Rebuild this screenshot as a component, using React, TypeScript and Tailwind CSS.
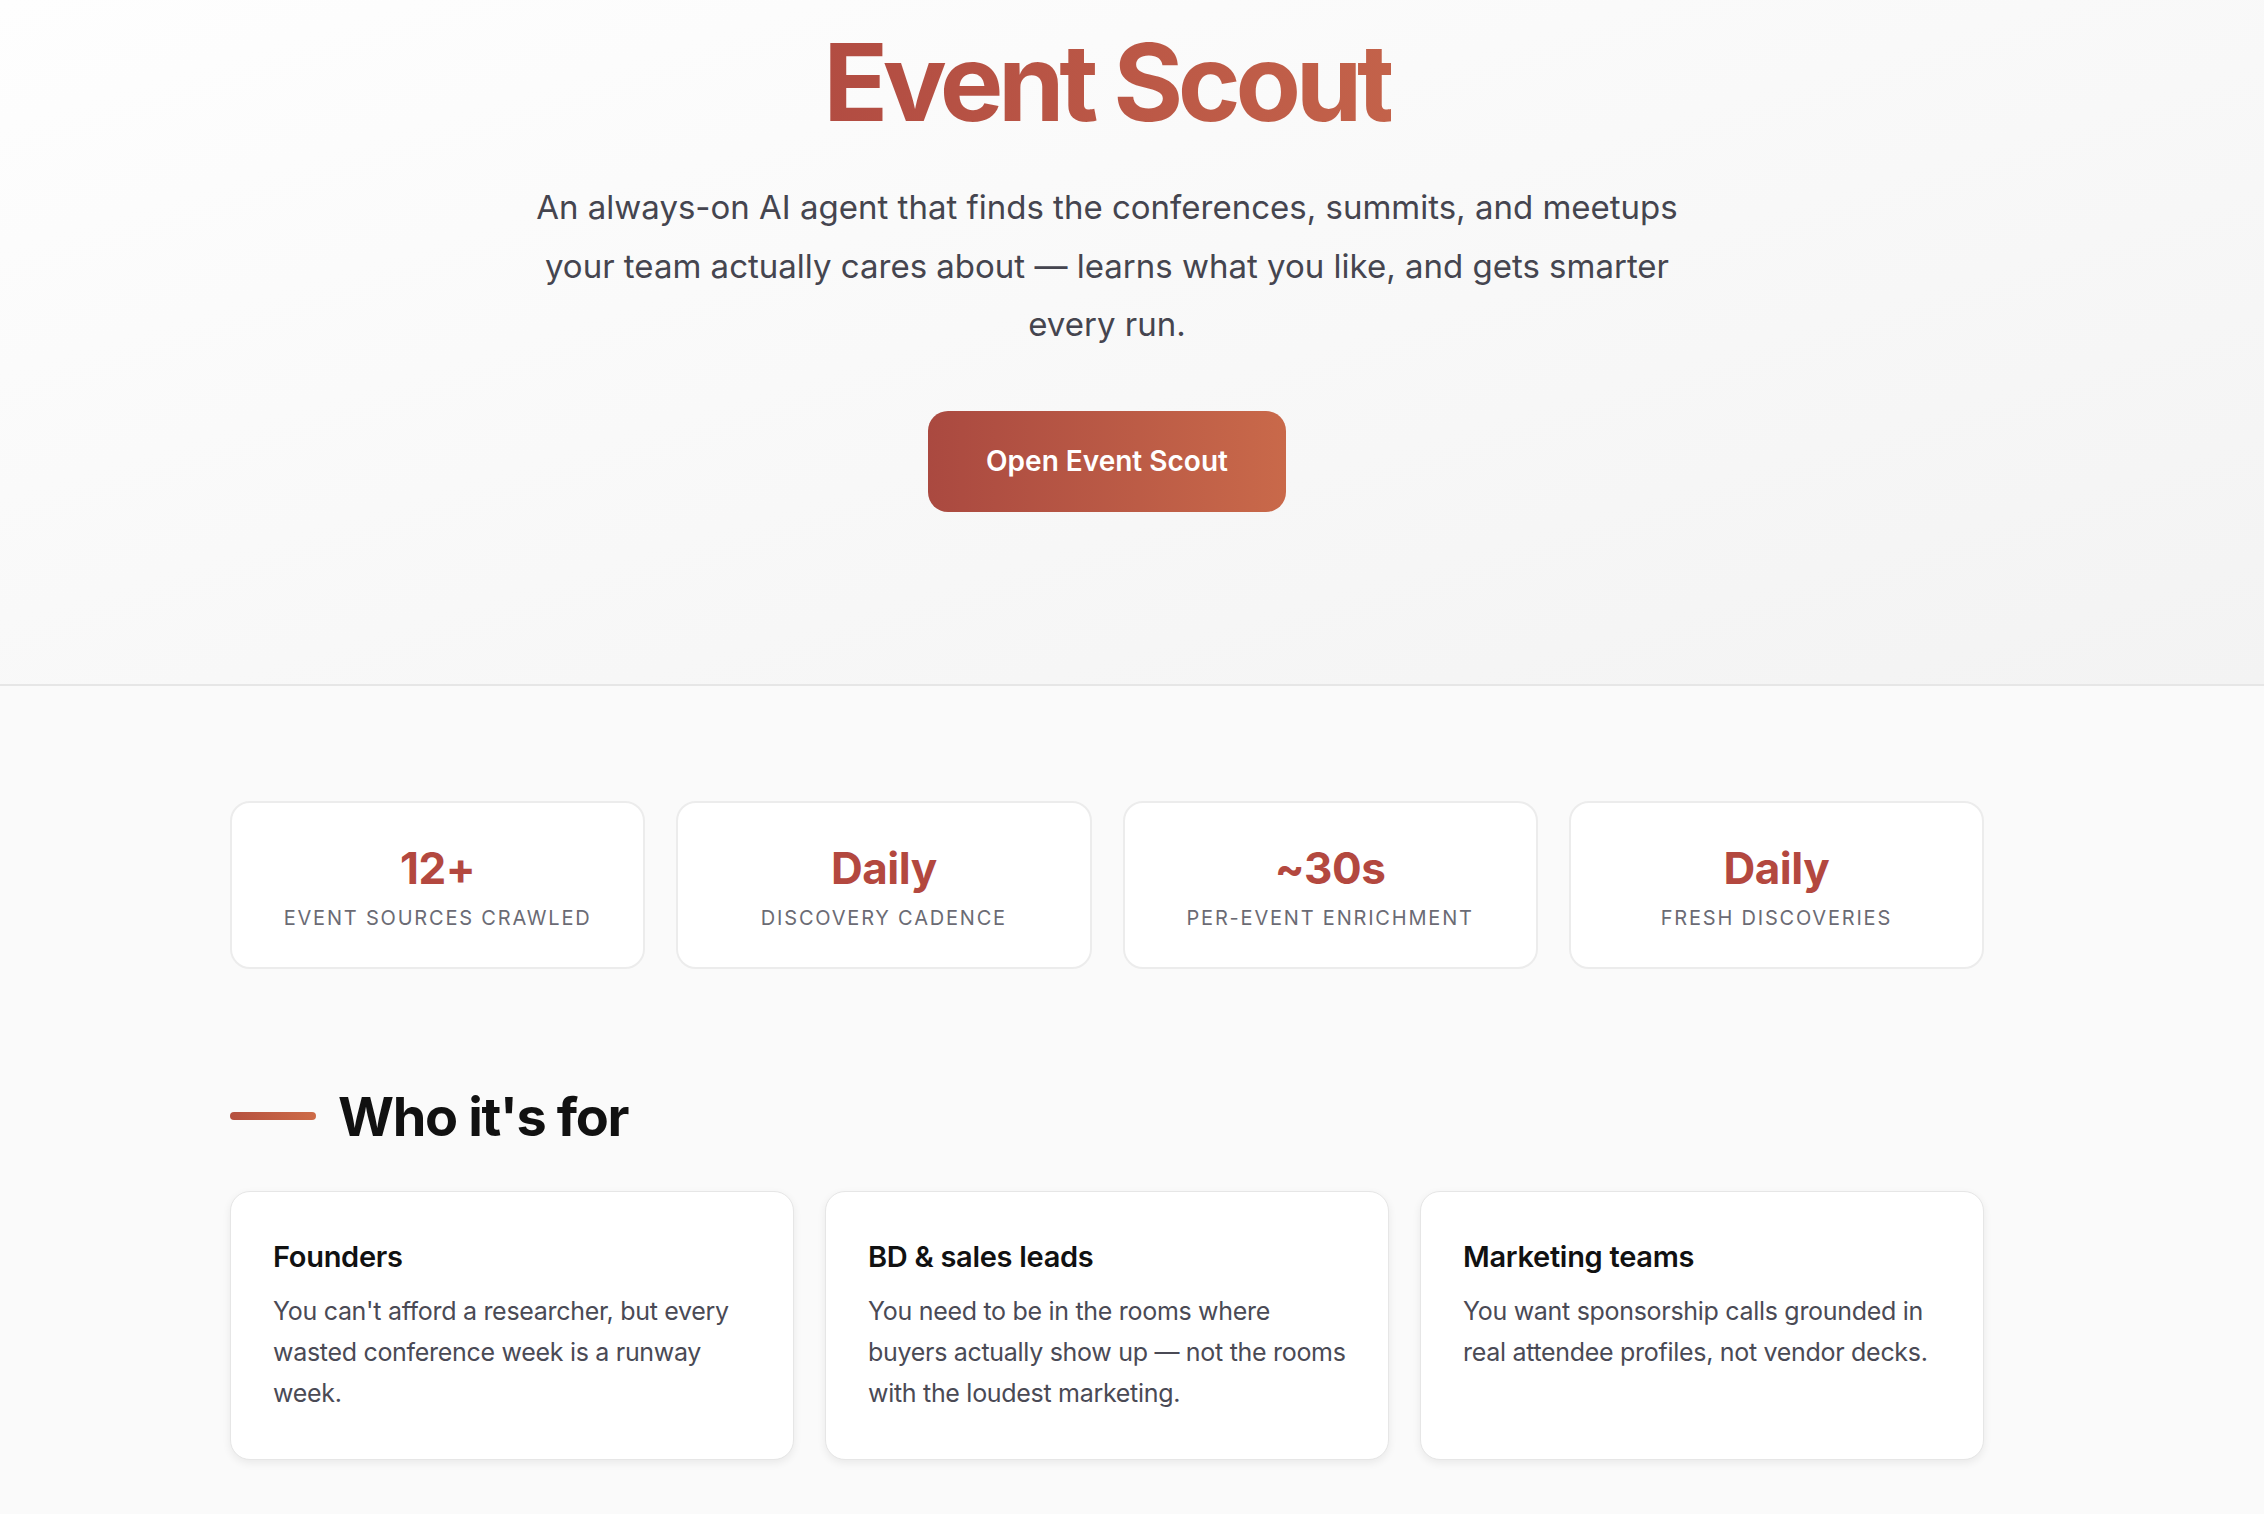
import React from "react";

const stats = [
  { value: "12+", label: "Event sources crawled" },
  { value: "Daily", label: "Discovery cadence" },
  { value: "~30s", label: "Per-event enrichment" },
  { value: "Daily", label: "Fresh discoveries" },
];

const audiences = [
  {
    title: "Founders",
    body: "You can't afford a researcher, but every wasted conference week is a runway week.",
  },
  {
    title: "BD & sales leads",
    body: "You need to be in the rooms where buyers actually show up — not the rooms with the loudest marketing.",
  },
  {
    title: "Marketing teams",
    body: "You want sponsorship calls grounded in real attendee profiles, not vendor decks.",
  },
];

export default function App() {
  return (
    <div
      className="min-h-[1514px] bg-[#fafafa] text-[#111111]"
      style={{ fontFamily: "Inter, 'Noto Sans', sans-serif" }}
    >
      {/* Hero */}
      <section className="border-b-2 border-[#e6e6e6] bg-linear-to-br from-[#fefefe] to-[#f3f3f3]">
        <div className="flex flex-col items-center pr-[50px] pt-[29px] pb-[172px] text-center">
          <h1 className="bg-linear-to-r from-[#b24c42] to-[#c3624a] bg-clip-text text-[107px] font-bold leading-none tracking-[-0.05em] text-transparent">
            Event Scout
          </h1>
          <p className="mt-[42px] max-w-[1170px] text-[33px] leading-[58.5px] text-[#45454f]">
            An always-on AI agent that finds the conferences, summits, and meetups your team
            actually cares about — learns what you like, and gets smarter every run.
          </p>
          <button className="mt-[57px] flex h-[101px] w-[358px] items-center justify-center rounded-[20px] bg-linear-to-r from-[#aa4940] to-[#c9694a] text-[28px] font-semibold text-white">
            Open Event Scout
          </button>
        </div>
      </section>

      <main className="ml-[230px] w-[1754px] pt-[115px] pb-[55px]">
        {/* Stats */}
        <div className="grid grid-cols-4 gap-[31px]">
          {stats.map((s, i) => (
            <div
              key={i}
              className="flex flex-col items-center rounded-[20px] border-2 border-[#ececec] bg-white pt-[39px] pb-[35px]"
            >
              <span className="text-[44px] font-bold leading-[52px] tracking-[-0.01em] text-[#b3483f]">
                {s.value}
              </span>
              <span className="mt-[10px] text-[20px] uppercase leading-[28px] tracking-[0.09em] text-[#6b6b74]">
                {s.label}
              </span>
            </div>
          ))}
        </div>

        {/* Who it's for */}
        <div className="mt-[115px] flex items-center gap-[22px]">
          <span className="h-[8px] w-[86px] rounded-full bg-linear-to-r from-[#b5503f] to-[#cd6b47]" />
          <h2 className="text-[54px] font-bold leading-[65px] tracking-[-0.025em]">Who it's for</h2>
        </div>

        <div className="mt-[42px] grid grid-cols-3 gap-[31px]">
          {audiences.map((a) => (
            <div
              key={a.title}
              className="rounded-[20px] border border-[#e6e6e6] bg-white px-[42px] pt-[47px] pb-[45px] shadow-[0_3px_8px_rgba(0,0,0,0.07)]"
            >
              <h3 className="text-[29px] font-semibold leading-[36px] tracking-[-0.01em] text-[#111111]">
                {a.title}
              </h3>
              <p className="mt-[16px] text-[25px] leading-[41px] tracking-[-0.012em] text-[#4a4a55]">
                {a.body}
              </p>
            </div>
          ))}
        </div>
      </main>
    </div>
  );
}
